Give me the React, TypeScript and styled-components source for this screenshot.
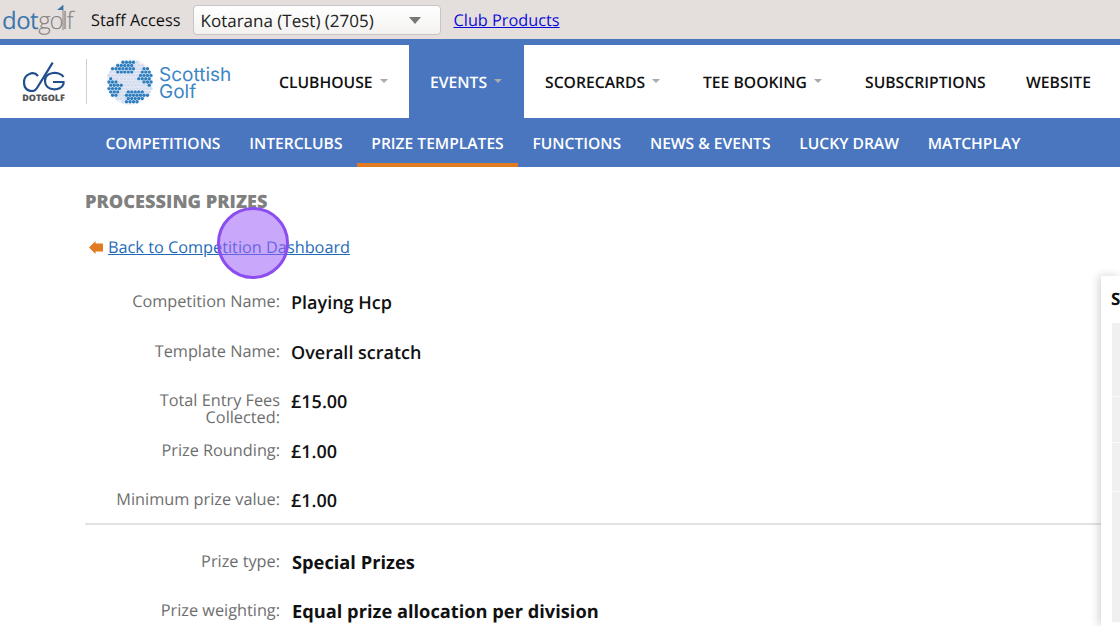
import React from 'react';
import styled, { createGlobalStyle } from 'styled-components';

const GlobalStyle = createGlobalStyle`
  html, body {
    margin: 0;
    padding: 0;
    height: 100%;
    overflow: hidden;
    background: #fff;
    font-family: 'Open Sans', 'Liberation Sans', sans-serif;
    text-rendering: geometricPrecision;
  }
`;

const Page = styled.div`
  position: relative;
  width: 1120px;
  height: 626px;
  overflow: hidden;
`;

const TopBar = styled.div`
  height: 39px;
  background: #e4dfdd;
  display: flex;
  align-items: center;
  box-sizing: border-box;
  padding-left: 2px;
`;

const TopLogo = styled.div`
  width: 73px;
  height: 39px;
  position: relative;
  display: flex;
  align-items: center;
  font-size: 24px;
  line-height: 1;
  letter-spacing: -0.5px;
  font-weight: 300;
`;

const Dot = styled.span`
  color: #3a76ac;
  margin-top: 3px;
  font-weight: 400;
`;

const Golf = styled.span`
  color: #85827f;
  margin-top: 3px;
  font-weight: 300;
  letter-spacing: -1.2px;
`;

const Flag = styled.svg`
  position: absolute;
  left: 53px;
  top: 4px;
`;

const StaffLabel = styled.span`
  margin-left: 16px;
  font-size: 16.3px;
  color: #111;
`;

const ClubSelect = styled.div`
  margin-left: 12px;
  width: 248px;
  height: 30px;
  box-sizing: border-box;
  margin-top: 1px;
  padding: 0 19px 0 7px;
  background: linear-gradient(#fff, #f3f2f1);
  border: 1px solid #c8c6c4;
  border-radius: 4px;
  display: flex;
  align-items: center;
  justify-content: space-between;
  font-size: 17px;
  color: #222;
`;

const SelectArrow = styled.span`
  width: 0;
  height: 0;
  border-left: 6.5px solid transparent;
  border-right: 6.5px solid transparent;
  border-top: 7px solid #777;
`;

const TopLink = styled.a`
  margin-left: 13px;
  font-size: 16.3px;
  color: #0a0ad8;
  text-decoration: underline;
`;

const MainNav = styled.div`
  height: 73px;
  border-top: 6px solid #4a76c0;
  background: #fff;
  display: flex;
  align-items: stretch;
`;

const Brand = styled.div`
  width: 258px;
  display: flex;
  align-items: center;
  padding-left: 22px;
  box-sizing: border-box;
`;

const DotgolfMark = styled.div`
  width: 43px;
  display: flex;
  flex-direction: column;
  align-items: center;
  margin-top: 1px;
`;

const MarkText = styled.span`
  font-size: 9px;
  line-height: 9px;
  font-weight: 800;
  color: #555;
  margin-top: 1px;
  letter-spacing: -0.1px;
`;

const BrandDivider = styled.span`
  width: 1px;
  height: 45px;
  background: #cfcfcf;
  margin: 0 20px 0 21px;
`;

const ScottishText = styled.div`
  margin-left: 6px;
  font-family: Inter, 'Open Sans', sans-serif;
  font-size: 19px;
  line-height: 17px;
  color: #3c86c4;
  margin-top: 2px;
`;

const NavItem = styled.div<{ $active?: boolean; $width: number }>`
  width: ${(p) => p.$width}px;
  box-sizing: border-box;
  padding-left: 21px;
  display: flex;
  align-items: center;
  gap: 7px;
  font-size: 15.7px;
  font-weight: 600;
  white-space: nowrap;
  color: ${(p) => (p.$active ? '#fff' : '#111')};
  background: ${(p) => (p.$active ? '#4a76c0' : '#fff')};
`;

const NavCaret = styled.span`
  width: 0;
  height: 0;
  margin-top: -2px;
  border-left: 4.5px solid transparent;
  border-right: 4.5px solid transparent;
  border-top: 4.5px solid #aaa;
`;

const SubNav = styled.div`
  height: 49px;
  background: #4a76c0;
  display: flex;
  padding-left: 91px;
`;

const SubItem = styled.div<{ $active?: boolean }>`
  padding: 0 14.42px;
  display: flex;
  align-items: center;
  box-sizing: border-box;
  font-size: 15.6px;
  font-weight: 600;
  color: #fff;
  white-space: nowrap;
  border-bottom: 4px solid ${(p) => (p.$active ? '#e07b22' : 'transparent')};
  border-top: 4px solid transparent;
`;

const Body = styled.div`
  display: flex;
  height: 459px;
`;

const Content = styled.div`
  width: 1016px;
  margin-left: 85px;
  padding-top: 23px;
  flex: none;
`;

const Heading = styled.h2`
  margin: 0;
  font-size: 18.2px;
  line-height: 24px;
  font-weight: 800;
  color: #808080;
`;

const BackRow = styled.div`
  display: flex;
  align-items: center;
  margin-top: 21px;
  height: 24px;
  padding-left: 4px;
  gap: 5px;
`;

const BackLink = styled.a`
  font-size: 16.3px;
  color: #1f6bb8;
  text-decoration: underline;
`;

const Rows = styled.div`
  margin-top: 28px;
`;

const Row = styled.div<{ $gap?: number }>`
  display: flex;
  height: 49.5px;
  gap: ${(p) => p.$gap ?? 11}px;
`;

const Label = styled.div<{ $raised?: boolean }>`
  width: 195px;
  flex: none;
  text-align: right;
  font-size: 16.3px;
  line-height: 17px;
  color: #6e6e6e;
  padding-top: ${(p) => (p.$raised ? 5 : 6)}px;
`;

const Value = styled.div<{ $strong?: boolean }>`
  font-size: ${(p) => (p.$strong ? 18.25 : 18)}px;
  line-height: 24px;
  font-weight: ${(p) => (p.$strong ? 700 : 600)};
  color: #111;
  padding-top: ${(p) => (p.$strong ? 3 : 4)}px;
`;

const Rule = styled.hr`
  margin: -12px 0 23px;
  border: none;
  border-top: 2px solid #e2e2e2;
`;

const SidePanel = styled.aside`
  margin-top: 109px;
  flex: 1;
  background: #fff;
  box-shadow: -2px 0 10px rgba(0, 0, 0, 0.18);
  padding: 12px 0 0 10px;
`;

const PanelTitle = styled.div`
  font-size: 17px;
  line-height: 22px;
  font-weight: 700;
  color: #111;
  overflow: hidden;
`;

const PanelCell = styled.div<{ $h: number }>`
  height: ${(p) => p.$h}px;
  background: #f0f0f0;
  border-bottom: 1px solid #fbfbfb;
`;

const PanelTable = styled.div`
  margin: 13px 0 0 1px;
`;

const Pointer = styled.div`
  position: absolute;
  left: 217px;
  top: 207px;
  width: 72px;
  height: 72px;
  box-sizing: border-box;
  border-radius: 50%;
  border: 3px solid #8b4cf0;
  background: rgba(156, 96, 250, 0.55);
`;

// dimples of the golf ball, dark ones are the field around the saltire
const ballDots = () => {
  const dots: React.ReactElement[] = [];
  const turn = (18 * Math.PI) / 180;
  for (let row = -7; row <= 7; row++) {
    for (let col = -7; col <= 7; col++) {
      const dx = col * 3.5 + (row % 2 ? 1.75 : 0);
      const dy = row * 3.3;
      const dist = Math.hypot(dx, dy);
      if (dist > 22.4) continue;
      const rx = dx * Math.cos(turn) - dy * Math.sin(turn);
      const ry = dx * Math.sin(turn) + dy * Math.cos(turn);
      const field =
        dist > 9 &&
        (Math.abs(ry) - Math.abs(rx) > 4 || Math.abs(rx) - Math.abs(ry) > 8);
      dots.push(
        <circle
          key={`${row}-${col}`}
          cx={23 + dx}
          cy={23 + dy}
          r={1.7}
          fill={field ? '#2f7fbe' : '#d4dcef'}
        />,
      );
    }
  }
  return dots;
};

const mainItems = [
  { label: 'CLUBHOUSE', width: 151, caret: true },
  { label: 'EVENTS', width: 115, caret: true, active: true },
  { label: 'SCORECARDS', width: 158, caret: true },
  { label: 'TEE BOOKING', width: 162, caret: true },
  { label: 'SUBSCRIPTIONS', width: 161 },
  { label: 'WEBSITE', width: 115 },
];

const subItems = [
  'COMPETITIONS',
  'INTERCLUBS',
  'PRIZE TEMPLATES',
  'FUNCTIONS',
  'NEWS & EVENTS',
  'LUCKY DRAW',
  'MATCHPLAY',
];

const App = (): JSX.Element => (
  <Page>
    <GlobalStyle />
    <TopBar>
      <TopLogo>
        <Dot>dot</Dot>
        <Golf>golf</Golf>
        <Flag width="12" height="32" viewBox="0 0 12 32">
          <path d="M8 1 L8 26" stroke="#85827f" strokeWidth="1" fill="none" />
          <path d="M8 1 L8 6 L2 6 Z" fill="#3a76ac" />
        </Flag>
      </TopLogo>
      <StaffLabel>Staff Access</StaffLabel>
      <ClubSelect>
        Kotarana (Test) (2705)
        <SelectArrow />
      </ClubSelect>
      <TopLink>Club Products</TopLink>
    </TopBar>
    <MainNav>
      <Brand>
        <DotgolfMark>
          <svg width="42" height="30" viewBox="0 0 42 30">
            <path
              d="M29.7 0.7 L14 26 C11 31 1 30 1 20 C1 13 10 8 15 14"
              fill="none"
              stroke="#1f4e8c"
              strokeWidth="2.2"
            />
            <path
              d="M40.5 15 C37 9 22 9 22 19 C22 29 38 30 40.5 22 L40.5 20 L30 20"
              fill="none"
              stroke="#1f4e8c"
              strokeWidth="2.2"
            />
          </svg>
          <MarkText>DOTGOLF</MarkText>
        </DotgolfMark>
        <BrandDivider />
        <svg width="46" height="46" viewBox="0 0 46 46">
          <circle cx="23" cy="23" r="23" fill="#eef1f8" />
          {ballDots()}
        </svg>
        <ScottishText>
          Scottish
          <br />
          Golf
        </ScottishText>
      </Brand>
      {mainItems.map((item) => (
        <NavItem key={item.label} $active={item.active} $width={item.width}>
          {item.label}
          {item.caret && <NavCaret />}
        </NavItem>
      ))}
    </MainNav>
    <SubNav>
      {subItems.map((item) => (
        <SubItem key={item} $active={item === 'PRIZE TEMPLATES'}>
          {item}
        </SubItem>
      ))}
    </SubNav>
    <Body>
      <Content>
        <Heading>PROCESSING PRIZES</Heading>
        <BackRow>
          <svg width="14" height="13" viewBox="0 0 14 13">
            <path d="M0 6.5 L6.5 0 L6.5 2.5 L14 2.5 L14 10.5 L6.5 10.5 L6.5 13 Z" fill="#e07b22" />
          </svg>
          <BackLink>Back to Competition Dashboard</BackLink>
        </BackRow>
        <Rows>
          <Row>
            <Label>Competition Name:</Label>
            <Value>Playing Hcp</Value>
          </Row>
          <Row>
            <Label>Template Name:</Label>
            <Value>Overall scratch</Value>
          </Row>
          <Row>
            <Label>
              Total Entry Fees
              <br />
              Collected:
            </Label>
            <Value>£15.00</Value>
          </Row>
          <Row>
            <Label>Prize Rounding:</Label>
            <Value>£1.00</Value>
          </Row>
          <Row>
            <Label>Minimum prize value:</Label>
            <Value>£1.00</Value>
          </Row>
        </Rows>
        <Rule />
        <Row $gap={12}>
          <Label $raised>Prize type:</Label>
          <Value $strong>Special Prizes</Value>
        </Row>
        <Row $gap={12}>
          <Label $raised>Prize weighting:</Label>
          <Value $strong>Equal prize allocation per division</Value>
        </Row>
      </Content>
      <SidePanel>
        <PanelTitle>S</PanelTitle>
        <PanelTable>
          <PanelCell $h={73} />
          <PanelCell $h={45} />
          <PanelCell $h={48} />
          <PanelCell $h={130} />
        </PanelTable>
      </SidePanel>
    </Body>
    <Pointer />
  </Page>
);

export default App;
